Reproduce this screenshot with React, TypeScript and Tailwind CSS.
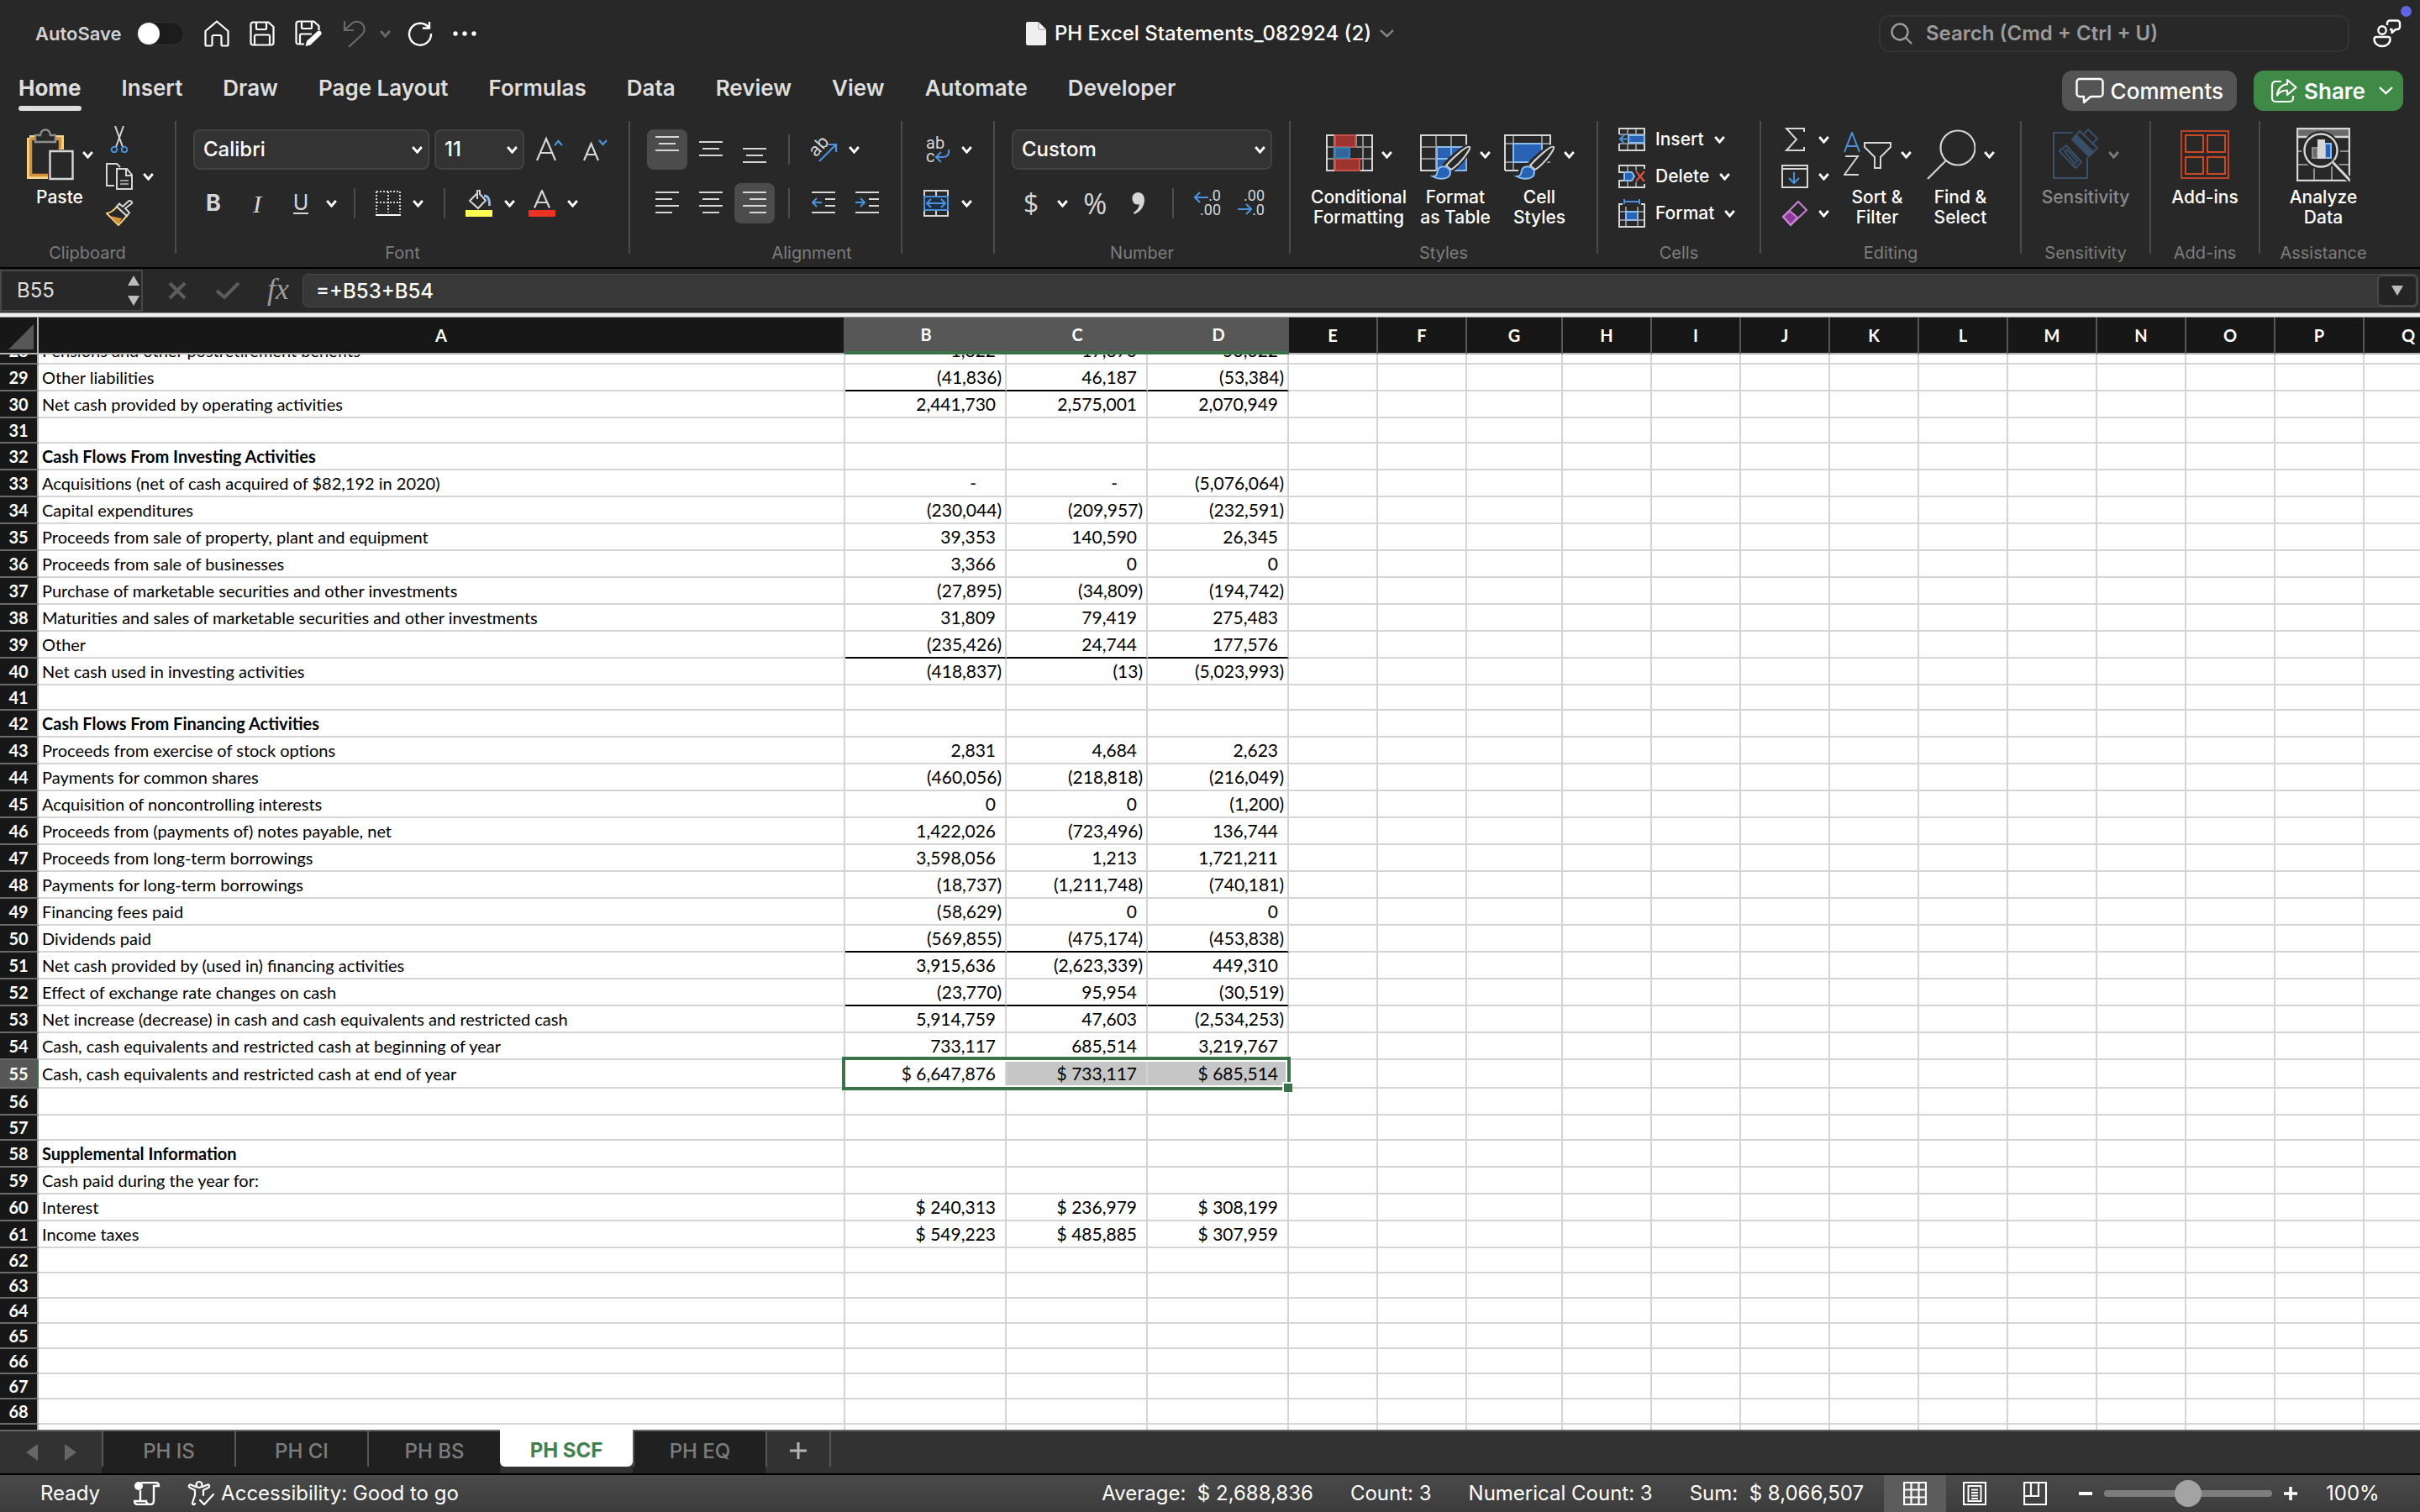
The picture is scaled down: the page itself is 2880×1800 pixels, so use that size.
import React from 'react';

type IconProps = { className?: string };

const tabs = ['Home', 'Insert', 'Draw', 'Page Layout', 'Formulas', 'Data', 'Review', 'View', 'Automate', 'Developer'];
const sheets = ['PH IS', 'PH CI', 'PH BS', 'PH SCF', 'PH EQ'];
const columns = ['A', 'B', 'C', 'D', 'E', 'F', 'G', 'H', 'I', 'J', 'K', 'L', 'M', 'N', 'O', 'P', 'Q'];
const emptyColumns = columns.slice(4);

type Row = { n: number; label?: string; bold?: boolean; values?: string[]; total?: boolean; h?: string };

const rows: Row[] = [
    { n: 29, label: 'Other liabilities', values: ['(41,836)', '46,187', '(53,384)'], total: true },
    { n: 30, label: 'Net cash provided by operating activities', values: ['2,441,730', '2,575,001', '2,070,949'] },
    { n: 31, h: 'h-[30px]' },
    { n: 32, label: 'Cash Flows From Investing Activities', bold: true },
    { n: 33, label: 'Acquisitions (net of cash acquired of $82,192 in 2020)', values: ['-', '-', '(5,076,064)'] },
    { n: 34, label: 'Capital expenditures', values: ['(230,044)', '(209,957)', '(232,591)'] },
    { n: 35, label: 'Proceeds from sale of property, plant and equipment', values: ['39,353', '140,590', '26,345'] },
    { n: 36, label: 'Proceeds from sale of businesses', values: ['3,366', '0', '0'] },
    { n: 37, label: 'Purchase of marketable securities and other investments', values: ['(27,895)', '(34,809)', '(194,742)'] },
    { n: 38, label: 'Maturities and sales of marketable securities and other investments', values: ['31,809', '79,419', '275,483'] },
    { n: 39, label: 'Other', values: ['(235,426)', '24,744', '177,576'], total: true },
    { n: 40, label: 'Net cash used in investing activities', values: ['(418,837)', '(13)', '(5,023,993)'] },
    { n: 41, h: 'h-[30px]' },
    { n: 42, label: 'Cash Flows From Financing Activities', bold: true },
    { n: 43, label: 'Proceeds from exercise of stock options', values: ['2,831', '4,684', '2,623'] },
    { n: 44, label: 'Payments for common shares', values: ['(460,056)', '(218,818)', '(216,049)'] },
    { n: 45, label: 'Acquisition of noncontrolling interests', values: ['0', '0', '(1,200)'] },
    { n: 46, label: 'Proceeds from (payments of) notes payable, net', values: ['1,422,026', '(723,496)', '136,744'] },
    { n: 47, label: 'Proceeds from long-term borrowings', values: ['3,598,056', '1,213', '1,721,211'] },
    { n: 48, label: 'Payments for long-term borrowings', values: ['(18,737)', '(1,211,748)', '(740,181)'] },
    { n: 49, label: 'Financing fees paid', values: ['(58,629)', '0', '0'] },
    { n: 50, label: 'Dividends paid', values: ['(569,855)', '(475,174)', '(453,838)'], total: true },
    { n: 51, label: 'Net cash provided by (used in) financing activities', values: ['3,915,636', '(2,623,339)', '449,310'] },
    { n: 52, label: 'Effect of exchange rate changes on cash', values: ['(23,770)', '95,954', '(30,519)'], total: true },
    { n: 53, label: 'Net increase (decrease) in cash and cash equivalents and restricted cash', values: ['5,914,759', '47,603', '(2,534,253)'] },
    { n: 54, label: 'Cash, cash equivalents and restricted cash at beginning of year', values: ['733,117', '685,514', '3,219,767'] },
    { n: 55, label: 'Cash, cash equivalents and restricted cash at end of year', values: ['$ 6,647,876', '$ 733,117', '$ 685,514'], h: 'h-[34px]' },
    { n: 56 },
    { n: 57, h: 'h-[30px]' },
    { n: 58, label: 'Supplemental Information', bold: true },
    { n: 59, label: 'Cash paid during the year for:' },
    { n: 60, label: 'Interest', values: ['$ 240,313', '$ 236,979', '$ 308,199'] },
    { n: 61, label: 'Income taxes', values: ['$ 549,223', '$ 485,885', '$ 307,959'] },
    { n: 62, h: 'h-[30px]' },
    { n: 63, h: 'h-[30px]' },
    { n: 64, h: 'h-[30px]' },
    { n: 65, h: 'h-[30px]' },
    { n: 66, h: 'h-[30px]' },
    { n: 67, h: 'h-[30px]' },
    { n: 68, h: 'h-[30px]' },
];

const Chevron = ({ className = 'text-white' }: IconProps) => (
    <svg width="13" height="9" viewBox="0 0 13 9" fill="none" stroke="currentColor" strokeWidth="2.8" className={`shrink-0 ${className}`}>
        <path d="M1.2 1l5.3 6.2L11.8 1" />
    </svg>
);

const WideChevron = ({ className = 'text-white' }: IconProps) => (
    <svg width="17" height="10" viewBox="0 0 17 10" fill="none" stroke="currentColor" strokeWidth="2.4" className={`shrink-0 ${className}`}>
        <path d="M1 1l7.500 7.200L16 1" />
    </svg>
);

/* Title bar icons */

const HomeIcon = () => (
    <svg width="30" height="32" viewBox="0 0 30 32" fill="none" stroke="#fff" strokeWidth="2.2" strokeLinejoin="round">
        <path d="M1.500 13L15 1.500 28.500 13V29a1.500 1.500 0 0 1-1.500 1.500h-5.500a1 1 0 0 1-1-1V20a2 2 0 0 0-2-2h-7a2 2 0 0 0-2 2v9.500a1 1 0 0 1-1 1H3A1.500 1.500 0 0 1 1.500 29z" />
    </svg>
);

const SaveIcon = () => (
    <svg width="30" height="30" viewBox="0 0 30 30" fill="none" stroke="#fff" strokeWidth="2.2" strokeLinejoin="round">
        <path d="M4 1.500h18.500L28.500 7v19a2.500 2.500 0 0 1-2.500 2.500H4A2.500 2.500 0 0 1 1.500 26V4A2.500 2.500 0 0 1 4 1.500z" />
        <path d="M8 2v6.500A1.500 1.500 0 0 0 9.500 10h9A1.500 1.500 0 0 0 20 8.500V2M6 28V18a1.500 1.500 0 0 1 1.500-1.500h15A1.500 1.500 0 0 1 24 18v10" />
    </svg>
);

const SaveEditIcon = () => (
    <svg width="33" height="32" viewBox="0 0 33 32" fill="none" stroke="#fff" strokeWidth="2.2" strokeLinejoin="round">
        <path d="M11 28.500H4A2.500 2.500 0 0 1 1.500 26V4A2.500 2.500 0 0 1 4 1.500h18.500L28.500 7v5" />
        <path d="M8 2v6.500A1.500 1.500 0 0 0 9.500 10h9A1.500 1.500 0 0 0 20 8.500V2M6 28V18a1.500 1.500 0 0 1 1.500-1.500H20" />
        <path d="M14 25L26.500 13.500c1.500-1.300 3.200-1.200 4.300 0 1.200 1.200 1.200 3-.1 4.300L18.500 29.500 12.500 31z" fill="#fff" stroke="none" />
    </svg>
);

const UndoIcon = () => (
    <svg width="28" height="33" viewBox="0 0 28 33" fill="none" stroke="#6b6b6b" strokeWidth="2.2">
        <path d="M2 1v11h11M2.500 11.500L10 4.500c4-3.800 10-3.500 13.300 0 3.400 3.600 3.200 9-.3 12.500L7 32" />
    </svg>
);

const RedoIcon = () => (
    <svg width="30" height="30" viewBox="0 0 30 30" fill="none" stroke="#fff" strokeWidth="2.400">
        <path d="M18 8.500h8V1M25.500 8A13 13 0 1 0 28 15" />
    </svg>
);

const MoreIcon = () => (
    <svg width="28" height="6" viewBox="0 0 28 6" fill="#fff">
        <circle cx="3" cy="3" r="2.700" />
        <circle cx="14" cy="3" r="2.700" />
        <circle cx="25" cy="3" r="2.700" />
    </svg>
);

const DocIcon = () => (
    <svg width="24" height="28" viewBox="0 0 24 28">
        <path d="M2 0h13l9 9v17a2 2 0 0 1-2 2H2a2 2 0 0 1-2-2V2a2 2 0 0 1 2-2z" fill="#efefef" />
        <path d="M15 0l9 9h-7.500A1.500 1.500 0 0 1 15 7.500z" fill="#fff" stroke="#777" strokeWidth=".8" />
    </svg>
);

const SearchIcon = () => (
    <svg width="26" height="26" viewBox="0 0 26 26" fill="none" stroke="#9b9b9b" strokeWidth="2.400" className="shrink-0">
        <circle cx="11" cy="11" r="9.500" />
        <path d="M18 18l7 7" />
    </svg>
);

const PersonIcon = () => (
    <svg width="34" height="34" viewBox="0 0 34 34" fill="none" stroke="#fff" strokeWidth="2.400" strokeLinejoin="round">
        <circle cx="11" cy="13" r="4.700" />
        <path d="M1.500 23.500A2.500 2.500 0 0 1 4 21h14a2.500 2.500 0 0 1 2.500 2.500c0 5-4 8.500-9.500 8.500s-9.500-3.500-9.500-8.500z" />
        <path d="M17 7V4.500A3 3 0 0 1 20 1.500h9a3 3 0 0 1 3 3V9a3 3 0 0 1-3 3h-2l-4.500 4V12H20" />
    </svg>
);

const CommentIcon = () => (
    <svg width="34" height="32" viewBox="0 0 34 32" fill="none" stroke="#fff" strokeWidth="2.400" strokeLinejoin="round">
        <path d="M5 2h24a3.500 3.500 0 0 1 3.500 3.500v14A3.500 3.500 0 0 1 29 23H18l-8 7v-7H5a3.500 3.500 0 0 1-3.500-3.500v-14A3.500 3.500 0 0 1 5 2z" />
    </svg>
);

const ShareIcon = () => (
    <svg width="32" height="30" viewBox="0 0 32 30" fill="none" stroke="#fff" strokeWidth="2.200" strokeLinejoin="round">
        <path d="M13 4H6a4 4 0 0 0-4 4v16a4 4 0 0 0 4 4h17a4 4 0 0 0 4-4v-3" />
        <path d="M20 2l10.500 9L20 20v-5.500c-5 0-9 1.500-12 6C8.500 13.500 13 7.800 20 7.300z" />
    </svg>
);

/* Ribbon icons */

const PasteIcon = () => (
    <svg width="56" height="62" viewBox="0 0 56 62" fill="none">
        <path d="M3 11h38v14M3 11v46h22" stroke="#f5d58c" strokeWidth="6" />
        <path d="M4.500 12h35v12M4.500 12v43.500H25" stroke="#d8913a" strokeWidth="3.500" />
        <path d="M10 8h6c.6-4.500 2.800-6.500 6-6.500S27.400 3.500 28 8h6v8H10z" fill="#282828" stroke="#8e8e8e" strokeWidth="2.400" />
        <path d="M27.500 27h27v33h-27z" fill="#282828" stroke="#d6d6d6" strokeWidth="2.400" />
    </svg>
);

const CutIcon = () => (
    <svg width="32" height="32" viewBox="0 0 32 32" fill="none" strokeWidth="2">
        <path d="M11 0l9 25M21 0l-9 25" stroke="#d6d6d6" />
        <circle cx="10" cy="28" r="3.300" stroke="#4a92dc" />
        <circle cx="22" cy="28" r="3.300" stroke="#4a92dc" />
    </svg>
);

const CopyIcon = () => (
    <svg width="32" height="32" viewBox="0 0 32 32" fill="none" stroke="#d6d6d6" strokeWidth="2">
        <path d="M10 27H1V1h12l4 4M13 7h12l6 7v17H13zM24 7v8h7" />
        <path d="M17 21h10M17 25h10" stroke="#9a9a9a" />
    </svg>
);

const BrushIcon = () => (
    <svg width="32" height="32" viewBox="0 0 32 32" fill="none" strokeWidth="2">
        <path d="M13 8l12 11-10 11C10 25 5 20 1 16c5-1 9-4 12-8z" fill="#282828" stroke="#f3cf85" />
        <path d="M5 19l14 3-4 7z" fill="#d8913a" />
        <path d="M13 8l12 11 3-4-5-5 8-6c1-1-2-4-3.500-3L20 8l-4-3.500z" fill="#282828" stroke="#d6d6d6" />
    </svg>
);

const BordersIcon = () => (
    <svg width="30" height="30" viewBox="0 0 30 30" fill="none" stroke="#d6d6d6" strokeWidth="2">
        <path d="M1 1h28M1 14h28M1 1v25M15 1v25M29 1v25" strokeDasharray="2 2" />
        <path d="M0 29h30" stroke="#fff" />
    </svg>
);

const FillIcon = () => (
    <svg width="32" height="32" viewBox="0 0 32 32" fill="none" strokeWidth="2">
        <path d="M14 4L5 13l10 9 9-9.500L17 5V1.500c0-1-3-1-3 0V11" stroke="#d6d6d6" />
        <path d="M22 7c4 0 7 3 6.500 12" stroke="#8ebcec" strokeWidth="3" />
        <path d="M0 24h32v8H0z" fill="#ffff54" />
    </svg>
);

const AlignIcon = ({ lines }: { lines: [number, number, number][] }) => (
    <svg width="28" height="32" viewBox="0 0 28 32" stroke="#d6d6d6" strokeWidth="2">
        {lines.map(([x1, x2, y]) => (
            <path key={y} d={`M${x1} ${y}H${x2}`} />
        ))}
    </svg>
);

const IndentIcon = ({ out = false }: { out?: boolean }) => (
    <svg width="28" height="32" viewBox="0 0 28 32" fill="none" stroke="#d6d6d6" strokeWidth="2">
        <path d="M0 3h28M16 11h12M16 19h12M0 27h28" />
        <path d={out ? 'M12 15H1M6 10l-5 5 5 5' : 'M0 15h11M6 10l5 5-5 5'} stroke="#4a92dc" />
    </svg>
);

const OrientationIcon = () => (
    <svg width="34" height="32" viewBox="0 0 34 32" fill="none" className="overflow-visible">
        <text x="3" y="24" transform="rotate(-48 7 20)" fill="#d6d6d6" fontSize="21" fontFamily="Inter, sans-serif">ab</text>
        <path d="M11 30L31 10M22 10h9v9" stroke="#4a92dc" strokeWidth="2.200" />
    </svg>
);

const WrapIcon = () => (
    <svg width="32" height="34" viewBox="0 0 32 34" fill="none" className="overflow-visible">
        <text x="4" y="16" fill="#d6d6d6" fontSize="20" fontFamily="Roboto, sans-serif">ab</text>
        <text x="4" y="32" fill="#d6d6d6" fontSize="20" fontFamily="Roboto, sans-serif">c</text>
        <path d="M31 17c1 6-2 9-7 9h-7M22 20l-6 6 6 6" stroke="#4a92dc" strokeWidth="2.200" />
    </svg>
);

const MergeIcon = () => (
    <svg width="32" height="32" viewBox="0 0 32 32" fill="none" strokeWidth="2">
        <path d="M2 1h28v30H2zM16 1v6M16 25v6" stroke="#d6d6d6" />
        <path d="M2 8h28v16H2z" stroke="#4a92dc" fill="#1e2f42" />
        <path d="M6 16h20M10 11l-5 5 5 5M22 11l5 5-5 5" stroke="#4a92dc" />
    </svg>
);

const DecimalIcon = ({ less = false }: { less?: boolean }) => (
    <svg width="34" height="32" viewBox="0 0 34 32" fill="none" className="overflow-visible">
        <text x="33" y="13" textAnchor="end" fill="#d6d6d6" fontSize="18" fontFamily="Roboto, sans-serif">{less ? '.00' : '.0'}</text>
        <text x="33" y="30" textAnchor="end" fill="#d6d6d6" fontSize="18" fontFamily="Roboto, sans-serif">{less ? '.0' : '.00'}</text>
        <path d={less ? 'M1 23h16M11 17l6 6-6 6' : 'M18 9H2M8 3L2 9l6 6'} stroke="#4a92dc" strokeWidth="2.200" />
    </svg>
);

const ConditionalIcon = () => (
    <svg width="56" height="54" viewBox="0 0 56 54" fill="none" className="mt-[6px]">
        <path d="M1 15h54M1 29h54M10 1v43M44 1v43M36 1v43" stroke="#8e8e8e" strokeWidth="2" />
        <path d="M1 1h54v42H1z" stroke="#d6d6d6" strokeWidth="2" />
        <path d="M11 1h24v14H11zM11 29h29v14H11z" fill="#9c3530" stroke="#c9514c" strokeWidth="2" />
        <path d="M11 16h17v12H11z" fill="#33659c" stroke="#3b7fb0" strokeWidth="2" />
        <path d="M29 16h14v12H29z" fill="#282828" />
    </svg>
);

const PaintBrush = () => (
    <>
        <path d="M59 15c2 2-12 22-22 28l-8-6C36 28 56 11 59 15z" fill="#282828" stroke="#282828" strokeWidth="5" />
        <path d="M59 15c2 2-11 20-22 27l-6-5C38 29 56 12 59 15z" fill="#282828" stroke="#d6d6d6" strokeWidth="2" />
        <path d="M15 50c5 0 5-3 6-7 1-5 8-6 12-3s4 8 0 11c-5 3-13 2-18-1z" fill="#2862b4" stroke="#8ebcec" strokeWidth="2" />
    </>
);

const FormatTableIcon = () => (
    <svg width="61" height="54" viewBox="0 0 61 54" fill="none" className="mt-[6px]">
        <path d="M1 15h54M1 29h18M19 1v43M37 1v14" stroke="#8e8e8e" strokeWidth="2" />
        <path d="M20 16h35v27H20z" fill="#2862b4" />
        <path d="M20 43V15h36M20 29h35M37 15v28M55 16v27H20" stroke="#8ebcec" strokeWidth="1.800" />
        <path d="M19 43H1V1h54v14" stroke="#d6d6d6" strokeWidth="2" />
        <PaintBrush />
    </svg>
);

const CellStylesIcon = () => (
    <svg width="61" height="54" viewBox="0 0 61 54" fill="none" className="mt-[6px]">
        <path d="M1 11h54M1 33h54M11 1v42M45 1v42" stroke="#8e8e8e" strokeWidth="2" />
        <path d="M1 43V1h54v18M1 43h16" stroke="#d6d6d6" strokeWidth="2" />
        <path d="M11 11h34v22H11z" fill="#2862b4" stroke="#8ebcec" strokeWidth="2" />
        <path d="M34 34h24v14H34z" fill="#282828" />
        <PaintBrush />
    </svg>
);

const InsertCellsIcon = () => (
    <svg width="32" height="28" viewBox="0 0 32 28" fill="none" strokeWidth="2">
        <path d="M11 1v26M21 1v26M1 8h30M1 19h30" stroke="#8e8e8e" />
        <path d="M1 8V1h30v26H1v-8" stroke="#d6d6d6" />
        <path d="M0 9h14v9H0z" fill="#282828" />
        <path d="M12 9h19v9H12z" fill="#2862b4" stroke="#8ebcec" />
        <path d="M15 13.500H2M8 7.500l-6 6 6 6" stroke="#4a92dc" />
    </svg>
);

const DeleteCellsIcon = () => (
    <svg width="32" height="28" viewBox="0 0 32 28" fill="none" strokeWidth="2">
        <path d="M11 1v8M21 1v6M11 19v8M21 21v6" stroke="#8e8e8e" />
        <path d="M31 5V1H1v8h6M31 23v4H1v-8h6" stroke="#d6d6d6" />
        <path d="M7 9h9l3 5-3 5H7z" fill="#2862b4" stroke="#8ebcec" />
        <path d="M21 8l10 12M31 8L21 20" stroke="#d9534a" />
    </svg>
);

const FormatCellsIcon = () => (
    <svg width="32" height="34" viewBox="0 0 32 34" fill="none" strokeWidth="2">
        <path d="M9 9v24M23 9v24M1 15h30M1 25h30" stroke="#8e8e8e" />
        <path d="M5 6H1v27h30V6h-4" stroke="#d6d6d6" />
        <path d="M9 15h14v10H9z" fill="#2862b4" stroke="#8ebcec" />
        <path d="M7 3h18M7 0v6M25 0v6" stroke="#4a92dc" />
    </svg>
);

const SigmaIcon = () => (
    <svg width="32" height="30" viewBox="0 0 32 30" fill="none" stroke="#d6d6d6" strokeWidth="2">
        <path d="M27 6V2H6l12 13L6 28h21v-4" />
    </svg>
);

const FillDownIcon = () => (
    <svg width="32" height="28" viewBox="0 0 32 28" fill="none" strokeWidth="2">
        <path d="M1 1h30v26H1zM1 5h30" stroke="#d6d6d6" />
        <path d="M15 9v13M9 16l6 6 6-6" stroke="#4a92dc" />
    </svg>
);

const ClearIcon = () => (
    <svg width="32" height="32" viewBox="0 0 32 32" fill="none" stroke="#c883d4" strokeWidth="2">
        <path d="M2 20l8-7 9 8-8 9z" fill="#8e3a9c" />
        <path d="M2 20L20 2l10 10-19 18z" />
    </svg>
);

const SortFilterIcon = () => (
    <svg width="58" height="54" viewBox="0 0 58 54" fill="none" strokeWidth="2">
        <path d="M1 24L10 1l9 23M4 17h12" stroke="#4a92dc" />
        <path d="M2 29h15L1 51h17" stroke="#d6d6d6" />
        <path d="M25 13h31v5L44 30v13h-7V30L25 18z" stroke="#d6d6d6" />
    </svg>
);

const FindIcon = () => (
    <svg width="58" height="60" viewBox="0 0 58 60" fill="none" stroke="#d6d6d6" strokeWidth="2.200">
        <circle cx="37" cy="22" r="20.500" />
        <path d="M23 37L1 59" />
    </svg>
);

const SensitivityIcon = () => (
    <svg width="56" height="62" viewBox="0 0 56 62" fill="none" stroke="#38506a" strokeWidth="2">
        <path d="M24 5H1v54h40V34" />
        <path d="M8 27l8-7 18 20-7 7zM14 27l3-2 12 14-3 3z" />
        <path d="M23 13l9-10 21 20-9 9z" />
        <path d="M23 13l5-5 20 20-5 5z" fill="#38506a" />
        <path d="M36 8l6-7 11 11-7 7" />
    </svg>
);

const AddInsIcon = () => (
    <svg width="58" height="58" viewBox="0 0 58 58" fill="none" stroke="#cb4a26" strokeWidth="2">
        <path d="M1 1h56v56H1z" stroke="#b8442a" />
        <path d="M6 6h21v20H6zM32 6h21v20H32zM6 32h21v20H6zM32 32h21v20H32z" />
    </svg>
);

const AnalyzeIcon = () => (
    <svg width="64" height="64" viewBox="0 0 64 64" fill="none" strokeWidth="2">
        <path d="M1 2h62v9H1z" fill="#6a6a6a" />
        <path d="M1 28h62M1 44h62M21 44v18M42 44v18" stroke="#8e8e8e" />
        <path d="M1 1h62v62H1zM1 11h62" stroke="#d6d6d6" strokeWidth="2.400" />
        <circle cx="29" cy="27" r="23" fill="#282828" />
        <circle cx="29" cy="27" r="19.500" stroke="#d6d6d6" strokeWidth="2.400" />
        <path d="M19 24h6v12h-6z" fill="#6a6a6a" stroke="#8e8e8e" />
        <path d="M34 19h7v17h-7z" fill="#2862b4" stroke="#8ebcec" />
        <path d="M25 14h9v23h-9z" fill="#d6d6d6" />
        <path d="M43 41l20 21" stroke="#282828" strokeWidth="7" />
        <path d="M43 41l20 21" stroke="#d6d6d6" strokeWidth="3" />
    </svg>
);

/* Ribbon building blocks */

const Divider = () => <div className="h-[158px] w-[2px] shrink-0 bg-[#4c4c4c]" />;
const ShortDivider = () => <div className="h-9 w-[2px] shrink-0 bg-[#4c4c4c]" />;

const Group = ({ label, width, children }: { label: string; width: string; children: React.ReactNode }) => (
    <section className={`flex shrink-0 flex-col ${width}`}>
        <div className="h-36">{children}</div>
        <h2 className="text-center text-[20px] leading-[26px] text-[#7d7d7d]">{label}</h2>
    </section>
);

const BigButton = ({ icon, lines, width, menu = true, muted = false }: { icon: React.ReactNode; lines: string[]; width: string; menu?: boolean; muted?: boolean }) => (
    <button className={`flex shrink-0 flex-col items-center pt-2 ${width}`}>
        <span className="flex h-16 items-center gap-[10px]">
            {icon}
            {menu && <Chevron className={muted ? 'text-[#7d7d7d]' : 'text-white'} />}
        </span>
        <span className={`mt-[7px] flex flex-col text-[21px] leading-6 font-medium whitespace-nowrap ${muted ? 'text-[#8a8a8a]' : 'text-white'}`}>
            {lines.map((line) => (
                <span key={line}>{line}</span>
            ))}
        </span>
    </button>
);

const SmallButton = ({ icon, label, text, menu = true }: { icon: React.ReactNode; label: string; text?: boolean; menu?: boolean }) => (
    <button aria-label={label} className="flex h-8 items-center gap-3 text-[21px] font-medium text-white">
        {icon}
        {text && <span>{label}</span>}
        {menu && <Chevron />}
    </button>
);

const ToolButton = ({ label, active = false, children }: { label: string; active?: boolean; children: React.ReactNode }) => (
    <button aria-label={label} className={`flex h-12 w-12 shrink-0 items-center justify-center rounded-lg ${active ? 'bg-[#4c4c4c]' : ''}`}>
        {children}
    </button>
);

const Dropdown = ({ label, value, width }: { label: string; value: string; width: string }) => (
    <div className={`relative h-12 shrink-0 ${width}`}>
        <select aria-label={label} className="h-full w-full appearance-none rounded-lg border-2 border-[#424242] bg-[#333333] pl-[10px] text-[24px] font-medium text-white">
            <option>{value}</option>
        </select>
        <Chevron className="pointer-events-none absolute top-[20px] right-2 text-white" />
    </div>
);

const Ribbon = () => (
    <div className="flex h-[180px] border-b-2 border-black pt-1">
        <Group label="Clipboard" width="w-[208px]">
            <div className="flex gap-4 pl-8">
                <BigButton icon={<PasteIcon />} lines={['Paste']} width="w-[78px]" />
                <div className="flex flex-col gap-3 pt-[6px]">
                    <SmallButton label="Cut" icon={<CutIcon />} menu={false} />
                    <SmallButton label="Copy" icon={<CopyIcon />} />
                    <SmallButton label="Format Painter" icon={<BrushIcon />} menu={false} />
                </div>
            </div>
        </Group>
        <Divider />
        <Group label="Font" width="w-[538px]">
            <div className="flex flex-col gap-4 pt-[10px] pl-5">
                <div className="flex items-center gap-[6px]">
                    <Dropdown label="Font name" value="Calibri" width="w-[281px]" />
                    <Dropdown label="Font size" value="11" width="w-[107px]" />
                    <ToolButton label="Increase font size">
                        <svg width="32" height="32" viewBox="0 0 32 32" fill="none" strokeWidth="2.200">
                            <path d="M1 29L12 3l11 26M5 20h14" stroke="#d6d6d6" />
                            <path d="M22 11l4.500-5 4.500 5" stroke="#4a92dc" />
                        </svg>
                    </ToolButton>
                    <ToolButton label="Decrease font size">
                        <svg width="32" height="32" viewBox="0 0 32 32" fill="none" strokeWidth="2.200">
                            <path d="M3 29L11.500 9 20 29M6 22h11" stroke="#d6d6d6" />
                            <path d="M21 5l4.500 5 4.500-5" stroke="#4a92dc" />
                        </svg>
                    </ToolButton>
                </div>
                <div className="flex h-12 items-center text-[#d6d6d6]">
                    <div className="flex gap-1">
                        <ToolButton label="Bold"><span className="text-[27px] font-bold">B</span></ToolButton>
                        <ToolButton label="Italic"><span className="font-['Liberation_Serif'] text-[30px] italic">I</span></ToolButton>
                        <ToolButton label="Underline"><span className="border-b-2 border-[#d6d6d6] text-[25px] leading-6">U</span></ToolButton>
                    </div>
                    <button aria-label="Underline styles" className="mr-5 ml-[6px]"><Chevron /></button>
                    <ShortDivider />
                    <button aria-label="Borders" className="mx-6 flex items-center gap-[14px]"><BordersIcon /><Chevron /></button>
                    <ShortDivider />
                    <button aria-label="Fill color" className="mr-4 ml-6 flex items-center gap-[14px]"><FillIcon /><Chevron /></button>
                    <button aria-label="Font color" className="flex items-center gap-[14px]">
                        <svg width="32" height="32" viewBox="0 0 32 32" fill="none">
                            <path d="M7 21.500L16 1l9 20.500M10 15h12" stroke="#d6d6d6" strokeWidth="2.200" />
                            <path d="M0 24h32v8H0z" fill="#ea3323" />
                        </svg>
                        <Chevron />
                    </button>
                </div>
            </div>
        </Group>
        <Divider />
        <Group label="Alignment" width="w-[432px]">
            <div className="flex">
                <div className="flex w-[322px] flex-col gap-4 pt-[10px] pl-5">
                    <div className="flex items-center gap-4">
                        <div className="flex gap-1">
                            <ToolButton label="Top align" active><AlignIcon lines={[[0, 28, 1], [4, 24, 9], [0, 28, 17]]} /></ToolButton>
                            <ToolButton label="Middle align"><AlignIcon lines={[[0, 28, 7], [4, 24, 15], [0, 28, 23]]} /></ToolButton>
                            <ToolButton label="Bottom align"><AlignIcon lines={[[0, 28, 15], [4, 24, 23], [0, 28, 31]]} /></ToolButton>
                        </div>
                        <ShortDivider />
                        <button aria-label="Orientation" className="ml-2 flex items-center gap-3"><OrientationIcon /><Chevron /></button>
                    </div>
                    <div className="flex items-center gap-4">
                        <div className="flex gap-1">
                            <ToolButton label="Align left"><AlignIcon lines={[[0, 28, 3], [0, 20, 11], [0, 28, 19], [0, 20, 27]]} /></ToolButton>
                            <ToolButton label="Center"><AlignIcon lines={[[0, 28, 3], [4, 24, 11], [0, 28, 19], [4, 24, 27]]} /></ToolButton>
                            <ToolButton label="Align right" active><AlignIcon lines={[[0, 28, 3], [8, 28, 11], [0, 28, 19], [8, 28, 27]]} /></ToolButton>
                        </div>
                        <ShortDivider />
                        <div className="flex gap-1">
                            <ToolButton label="Decrease indent"><IndentIcon out /></ToolButton>
                            <ToolButton label="Increase indent"><IndentIcon /></ToolButton>
                        </div>
                    </div>
                </div>
                <Divider />
                <div className="flex flex-col gap-4 pt-[10px] pl-6">
                    <button aria-label="Wrap text" className="flex h-12 items-center gap-[14px]"><WrapIcon /><Chevron /></button>
                    <button aria-label="Merge and center" className="flex h-12 items-center gap-[14px]"><MergeIcon /><Chevron /></button>
                </div>
            </div>
        </Group>
        <Divider />
        <Group label="Number" width="w-[350px]">
            <div className="flex flex-col gap-4 pt-[10px] pl-5">
                <Dropdown label="Number format" value="Custom" width="w-[310px]" />
                <div className="flex items-center text-[#d6d6d6]">
                    <button aria-label="Accounting format" className="mr-2 flex items-center gap-[22px] pl-[14px]">
                        <span className="font-['Open_Sans'] text-[32px] leading-8">$</span>
                        <Chevron />
                    </button>
                    <ToolButton label="Percent style"><span className="font-['Open_Sans'] text-[34px] leading-8">%</span></ToolButton>
                    <div className="ml-1">
                        <ToolButton label="Comma style">
                            <svg width="16" height="28" viewBox="0 0 16 28" fill="#d6d6d6">
                                <path d="M7.500 1C12 1 15 4.500 15 10c0 8-5 14-12 17l-1-2c4-2.500 6.500-5.500 7-10-5 2-8.500-2-8.500-7 0-4 3-7 7-7z" />
                            </svg>
                        </ToolButton>
                    </div>
                    <div className="mx-4"><ShortDivider /></div>
                    <div className="flex gap-1">
                        <ToolButton label="Increase decimal"><DecimalIcon /></ToolButton>
                        <ToolButton label="Decrease decimal"><DecimalIcon less /></ToolButton>
                    </div>
                </div>
            </div>
        </Group>
        <Divider />
        <Group label="Styles" width="w-[364px]">
            <div className="flex gap-4 pl-6">
                <BigButton icon={<ConditionalIcon />} lines={['Conditional', 'Formatting']} width="w-[114px]" />
                <BigButton icon={<FormatTableIcon />} lines={['Format', 'as Table']} width="w-[84px]" />
                <BigButton icon={<CellStylesIcon />} lines={['Cell', 'Styles']} width="w-[84px]" />
            </div>
        </Group>
        <Divider />
        <Group label="Cells" width="w-[192px]">
            <div className="flex flex-col gap-3 pt-[6px] pl-6">
                <SmallButton label="Insert" icon={<InsertCellsIcon />} text />
                <SmallButton label="Delete" icon={<DeleteCellsIcon />} text />
                <SmallButton label="Format" icon={<FormatCellsIcon />} text />
            </div>
        </Group>
        <Divider />
        <Group label="Editing" width="w-[308px]">
            <div className="flex gap-4 pl-6">
                <div className="flex flex-col gap-3 pt-[6px]">
                    <SmallButton label="AutoSum" icon={<SigmaIcon />} />
                    <SmallButton label="Fill" icon={<FillDownIcon />} />
                    <SmallButton label="Clear" icon={<ClearIcon />} />
                </div>
                <BigButton icon={<SortFilterIcon />} lines={['Sort &', 'Filter']} width="w-[82px]" />
                <BigButton icon={<FindIcon />} lines={['Find &', 'Select']} width="w-[84px]" />
            </div>
        </Group>
        <Divider />
        <Group label="Sensitivity" width="w-[152px]">
            <BigButton icon={<SensitivityIcon />} lines={['Sensitivity']} width="w-full" muted />
        </Group>
        <Divider />
        <Group label="Add-ins" width="w-[128px]">
            <BigButton icon={<AddInsIcon />} lines={['Add-ins']} width="w-full" menu={false} />
        </Group>
        <Divider />
        <Group label="Assistance" width="w-[150px]">
            <BigButton icon={<AnalyzeIcon />} lines={['Analyze', 'Data']} width="w-full" menu={false} />
        </Group>
    </div>
);

const TitleBar = () => (
    <header className="grid h-20 grid-cols-[1fr_auto_1fr] items-center">
        <div className="flex items-center pl-[42px]">
            <label htmlFor="autosave" className="text-[22px] font-semibold text-[#d0d0d0]">AutoSave</label>
            <input
                id="autosave"
                type="checkbox"
                role="switch"
                className="ml-[18px] h-7 w-14 appearance-none rounded-full border border-[#333333] bg-[#1c1c1c] before:block before:h-[26px] before:w-[26px] before:rounded-full before:bg-white before:content-['']"
            />
            <button aria-label="Home" className="ml-6"><HomeIcon /></button>
            <button aria-label="Save" className="ml-6"><SaveIcon /></button>
            <button aria-label="Save as" className="ml-6"><SaveEditIcon /></button>
            <button aria-label="Undo" className="ml-6 flex items-center gap-4"><UndoIcon /><Chevron className="text-[#6b6b6b]" /></button>
            <button aria-label="Redo" className="ml-5"><RedoIcon /></button>
            <button aria-label="More" className="ml-6"><MoreIcon /></button>
        </div>
        <button className="flex items-center gap-[10px] text-[24px] font-medium text-white">
            <DocIcon />
            PH Excel Statements_082924 (2)
            <WideChevron className="text-[#8a8a8a]" />
        </button>
        <div className="flex items-center justify-end pr-[22px]">
            <label className="flex h-11 w-[560px] items-center gap-4 rounded-xl border-2 border-[#333333] pl-3">
                <SearchIcon />
                <input placeholder="Search (Cmd + Ctrl + U)" aria-label="Search" className="w-full bg-transparent text-[24px] font-semibold placeholder:text-[#9b9b9b]" />
            </label>
            <button aria-label="Presence" className="relative ml-7">
                <PersonIcon />
                <span className="absolute -top-4 -right-3 h-[13px] w-[13px] rounded-full bg-[#6264e8]" />
            </button>
        </div>
    </header>
);

const TabBar = () => (
    <div className="flex h-[60px] justify-between pr-5">
        <nav className="flex gap-12 pt-2 pl-[22px] text-[26px] leading-[34px] font-semibold text-[#dedede]">
            {tabs.map((tab) => (
                <a key={tab} href="#" className="flex flex-col whitespace-nowrap">
                    <span className={tab === 'Home' ? 'font-bold' : ''}>{tab}</span>
                    {tab === 'Home' && <span className="mt-1 h-[6px] rounded-full bg-[#dedede]" />}
                </a>
            ))}
        </nav>
        <div className="flex gap-5 pt-1 text-[26px] font-medium text-white">
            <button className="flex h-12 items-center gap-2 rounded-xl bg-[#545454] px-4">
                <CommentIcon />
                Comments
            </button>
            <button className="flex h-12 items-center gap-2 rounded-xl bg-[#3f8a46] pr-3 pl-5 font-semibold">
                <ShareIcon />
                Share
                <WideChevron className="ml-2 text-white" />
            </button>
        </div>
    </div>
);

const FormulaBar = () => (
    <div className="flex h-[52px] items-center">
        <div className="flex h-[50px] w-[170px] shrink-0 items-center justify-between border-2 border-[#474747] pr-[2px] pl-[18px]">
            <input aria-label="Name box" defaultValue="B55" className="w-24 bg-transparent text-[24px] text-[#dedede]" />
            <svg width="14" height="36" viewBox="0 0 14 36" fill="#bdbdbd">
                <path d="M0 12L7 0l7 12zM0 24h14L7 36z" />
            </svg>
        </div>
        <button aria-label="Cancel" className="ml-[30px]">
            <svg width="22" height="22" viewBox="0 0 22 22" stroke="#5c5c5c" strokeWidth="4"><path d="M2 2l18 18M20 2L2 20" /></svg>
        </button>
        <button aria-label="Enter" className="ml-[34px]">
            <svg width="30" height="22" viewBox="0 0 30 22" fill="none" stroke="#5c5c5c" strokeWidth="4"><path d="M2 11l9 8L28 2" /></svg>
        </button>
        <button aria-label="Insert function" className="ml-8 w-[42px] pb-1 text-left font-['Liberation_Serif'] text-[36px] leading-10 text-[#9b9b9b] italic">fx</button>
        <div className="mr-[2px] flex h-10 flex-1 rounded-md border border-[#484848] bg-[#383838]">
            <input aria-label="Formula" defaultValue="=+B53+B54" className="flex-1 bg-transparent pt-[2px] pl-[15px] text-[24px] font-medium text-white" />
            <button aria-label="Expand formula bar" className="flex w-12 items-center justify-center rounded-md border-2 border-[#484848] bg-[#242424]">
                <svg width="14" height="12" viewBox="0 0 14 12" fill="#bdbdbd"><path d="M0 0h14L7 12z" /></svg>
            </button>
        </div>
    </div>
);

const valuePadding = (value: string) => {
    if (value === '-') return 'pr-[34px]';
    return value.endsWith(')') ? 'pr-1' : 'pr-[11px]';
};

const Sheet = () => (
    <main className="min-h-0 flex-1 overflow-hidden bg-white font-[Lato,sans-serif] text-[21px] leading-[30px] text-black">
        <table className="w-[2920px] table-fixed border-separate border-spacing-0">
            <colgroup>
                <col className="w-[46px]" />
                <col className="w-[960px]" />
                <col className="w-[192px]" />
                <col className="w-[168px]" />
                <col className="w-[168px]" />
                <col className="w-[106px]" />
                <col className="w-[106px]" />
                <col className="w-[114px]" />
                {columns.slice(7).map((c) => (
                    <col key={c} className="w-[106px]" />
                ))}
            </colgroup>
            <thead>
                <tr className="h-11 text-[20px] text-white">
                    <td className="border-r-2 border-b-2 border-[#b4b4b4] bg-[#171717]">
                        <svg width="30" height="30" viewBox="0 0 30 30" className="mt-1 ml-[10px]"><path d="M30 0v30H0z" fill="#575757" /></svg>
                    </td>
                    {columns.map((c) => {
                        const selected = c === 'B' || c === 'C' || c === 'D';
                        return (
                            <th key={c} className={selected ? 'border-b-4 border-[#3b724a] bg-[#575757] font-bold' : 'border-r-2 border-b-2 border-r-[#575757] border-b-[#b4b4b4] bg-[#171717] font-bold'}>
                                {c}
                            </th>
                        );
                    })}
                </tr>
            </thead>
            <tbody>
                <tr>
                    <th className="border-r-2 border-b-2 border-r-[#b4b4b4] border-b-[#6a6a6a] bg-[#171717] text-[20px] text-white">
                        <div className="flex h-[10px] items-end justify-center overflow-hidden">28</div>
                    </th>
                    {['Pensions and other postretirement benefits', '1,822', '17,873', '53,322'].map((v, i) => (
                        <td key={v} className={`border-r-2 border-b-2 border-[#d4d4d4] ${i === 0 ? 'pl-1 text-[20px]' : 'pr-[11px]'}`}>
                            <div className={`flex h-[10px] items-end overflow-hidden ${i === 0 ? '' : 'justify-end'}`}>{v}</div>
                        </td>
                    ))}
                    {emptyColumns.map((c) => (
                        <td key={c} className="border-r-2 border-b-2 border-[#d4d4d4]" />
                    ))}
                </tr>
                {rows.map((row) => {
                    const active = row.n === 55;
                    return (
                        <tr key={row.n} className={row.h ?? 'h-8'}>
                            <th className={`border-r-2 border-b-2 border-b-[#6a6a6a] text-[20px] leading-7 text-white ${active ? 'border-r-[#3b724a] bg-[#575757]' : 'border-r-[#b4b4b4] bg-[#171717]'}`}>
                                {row.n}
                            </th>
                            <td className={`border-r-2 border-b-2 border-[#d4d4d4] pl-1 text-[20px] leading-7 whitespace-nowrap ${row.bold ? 'font-bold' : ''}`}>{row.label}</td>
                            {[0, 1, 2].map((i) => {
                                const value = row.values?.[i] ?? '';
                                return (
                                    <td
                                        key={i}
                                        className={`border-r-2 border-b-2 border-r-[#d4d4d4] text-right leading-7 ${row.total ? 'border-b-black' : 'border-b-[#d4d4d4]'} ${active && i > 0 ? 'bg-[#c6c6c6]' : ''} ${active ? 'relative' : ''} ${valuePadding(value)}`}
                                    >
                                        {value}
                                        {active && i === 2 && (
                                            <span className="absolute -top-1 -right-1 -bottom-1 w-[534px] border-4 border-[#3b724a] inset-ring-2 inset-ring-white">
                                                <span className="absolute -right-[6px] -bottom-[6px] h-3 w-3 border-t-2 border-l-2 border-white bg-[#3b724a]" />
                                            </span>
                                        )}
                                    </td>
                                );
                            })}
                            {emptyColumns.map((c) => (
                                <td key={c} className="border-r-2 border-b-2 border-[#d4d4d4]" />
                            ))}
                        </tr>
                    );
                })}
                <tr className="h-[30px]">
                    <th className="border-r-2 border-[#b4b4b4] bg-[#171717]" />
                    {columns.map((c) => (
                        <td key={c} className="border-r-2 border-[#d4d4d4]" />
                    ))}
                </tr>
            </tbody>
        </table>
    </main>
);

const SheetTabs = () => (
    <div className="flex h-[52px] shrink-0 border-t-2 border-[#666666] bg-[#323232]">
        <div className="flex w-[121px] items-center justify-center gap-8">
            <button aria-label="Previous sheet"><svg width="14" height="20" viewBox="0 0 14 20" fill="#666666"><path d="M14 0v20L0 10z" /></svg></button>
            <button aria-label="Next sheet"><svg width="14" height="20" viewBox="0 0 14 20" fill="#666666"><path d="M0 0v20l14-10z" /></svg></button>
        </div>
        {sheets.map((sheet) =>
            sheet === 'PH SCF' ? (
                <button key={sheet} className="-mt-[2px] mb-2 w-[158px] rounded-b-md bg-white pt-[6px] text-[24px] font-bold text-[#3f8150]">{sheet}</button>
            ) : (
                <div key={sheet} className="w-[158px] bg-[#202020]">
                    <button className="h-[42px] w-full border-l-2 border-[#575757] pt-[6px] text-[24px] font-medium text-[#7d7d7d]">{sheet}</button>
                </div>
            ),
        )}
        <button aria-label="New sheet" className="flex h-[42px] w-[78px] items-center justify-center border-x-2 border-[#575757] pt-1">
            <svg width="20" height="20" viewBox="0 0 20 20" stroke="#b4b4b4" strokeWidth="3"><path d="M10 0v20M0 10h20" /></svg>
        </button>
    </div>
);

const StatusBar = () => (
    <footer className="flex h-[46px] shrink-0 items-center border-t-2 border-black bg-linear-to-b from-[#4a4a4a] to-[#3c3c3c] text-[24px] whitespace-pre text-white">
        <span className="pl-12">Ready</span>
        <button aria-label="Record macro" className="ml-10">
            <svg width="32" height="28" viewBox="0 0 32 28" fill="none" stroke="#fff" strokeWidth="2.400">
                <path d="M9 1h17c3 0 4 1.500 4 4h-6M24 4v18c0 3-1 5-4 5H5c-3 0-4-1.500-4-4h14c0 2.500 2 4 5 4M8 10v13" />
                <circle cx="6" cy="5" r="5" fill="#fff" stroke="none" />
            </svg>
        </button>
        <button className="ml-8 flex items-center gap-2">
            <svg width="32" height="30" viewBox="0 0 32 30" fill="none" stroke="#fff" strokeWidth="2.200" strokeLinejoin="round" strokeLinecap="round">
                <circle cx="14" cy="4.500" r="3.500" />
                <path d="M10 7L4 4.500C2 4 1 7 3 8l6 3v6L6 26c-.5 2 2 3 3 1M18 7l6-2.500c2-.5 3 2.500 1 3.500l-6 3v6" />
                <path d="M15 23l5 5L31 16" />
            </svg>
            Accessibility: Good to go
        </button>
        <div className="ml-auto flex gap-11">
            <span>Average:  $ 2,688,836</span>
            <span>Count: 3</span>
            <span>Numerical Count: 3</span>
            <span>Sum:  $ 8,066,507</span>
        </div>
        <button aria-label="Normal view" className="ml-6 flex h-full w-[74px] items-center justify-center bg-[#5c5c5c]">
            <svg width="28" height="28" viewBox="0 0 28 28" fill="none" stroke="#fff" strokeWidth="2.200"><path d="M1 1h26v26H1zM1 9.500h26M1 18.500h26M9.500 1v26M18.500 1v26" /></svg>
        </button>
        <button aria-label="Page layout view" className="ml-5">
            <svg width="28" height="28" viewBox="0 0 28 28" fill="none" stroke="#fff" strokeWidth="2"><path d="M1 1h26v26H1zM6.500 5h15v18h-15zM10 9.500h8M10 13h8M10 16.500h8M10 20h8" /></svg>
        </button>
        <button aria-label="Page break view" className="ml-11">
            <svg width="28" height="28" viewBox="0 0 28 28" fill="none" stroke="#fff" strokeWidth="2.200"><path d="M1 1h26v26H1zM1 17h17V1M9 1v16" /></svg>
        </button>
        <button aria-label="Zoom out" className="ml-[38px]">
            <svg width="16" height="16" viewBox="0 0 16 16" stroke="#fff" strokeWidth="4"><path d="M0 8h16" /></svg>
        </button>
        <input
            type="range"
            aria-label="Zoom"
            defaultValue={50}
            className="mx-[14px] h-2 w-[200px] appearance-none rounded-full bg-[#7d7d7d] [&::-webkit-slider-thumb]:h-8 [&::-webkit-slider-thumb]:w-8 [&::-webkit-slider-thumb]:appearance-none [&::-webkit-slider-thumb]:rounded-full [&::-webkit-slider-thumb]:bg-[#a3a3a3]"
        />
        <button aria-label="Zoom in">
            <svg width="16" height="16" viewBox="0 0 16 16" stroke="#fff" strokeWidth="3.500"><path d="M0 8h16M8 0v16" /></svg>
        </button>
        <span className="w-[146px] pl-[34px]">100%</span>
    </footer>
);

export default function App() {
    return (
        <div className="flex h-screen flex-col overflow-hidden bg-[#282828] font-[Inter,sans-serif]">
            <TitleBar />
            <TabBar />
            <Ribbon />
            <FormulaBar />
            <div className="h-[6px] shrink-0 border-y border-[#9b9b9b] bg-[#f0f0f0]" />
            <Sheet />
            <SheetTabs />
            <StatusBar />
        </div>
    );
}
